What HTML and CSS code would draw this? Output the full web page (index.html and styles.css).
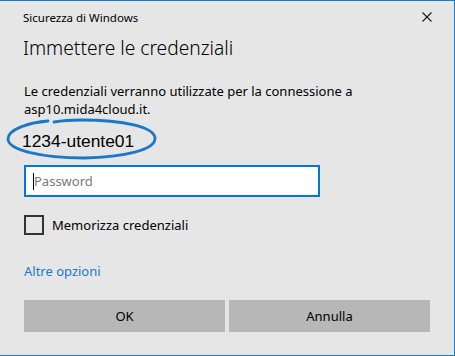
FILE: index.html
```html
<!DOCTYPE html>
<html lang="it">

<head>
  <meta charset="UTF-8" />
  <title>Sicurezza di Windows</title>
  <link rel="stylesheet" href="styles.css">
</head>

<body>

  <div class="dialog">

    <div class="title-bar">
      <span class="title">Sicurezza di Windows</span>
      <svg class="close" width="10" height="10" viewBox="0 0 10 10">
        <path d="M0.5 0.5 L9.5 9.5 M9.5 0.5 L0.5 9.5" stroke="#1a1a1a" stroke-width="1.1" fill="none" />
      </svg>
    </div>

    <h1>Immettere le credenziali</h1>

    <p class="message">Le credenziali verranno utilizzate per la connessione a asp10.mida4cloud.it.</p>

    <div class="user">
      <span class="user-name">1234-utente01</span>
      <!-- mano libera: cerchio blu attorno al nome utente -->
      <svg class="mark" width="152" height="44" viewBox="0 0 152 44">
        <path d="M42 4 C20 6 2 13 2 22 C2 33 36 41 78 41 C118 40 150 33 149 21 C148 10 118 3 75 3 C62 3 54 4 48 5"
          stroke="#1a78c6" stroke-width="2.8" fill="none" stroke-linecap="round" />
      </svg>
    </div>

    <div class="password-box">
      <span class="caret"></span>
      <input type="password" placeholder="Password" />
    </div>

    <label class="remember">
      <span class="check"></span>
      Memorizza credenziali
    </label>

    <a class="more" href="#">Altre opzioni</a>

    <div class="buttons">
      <button>OK</button>
      <button>Annulla</button>
    </div>

  </div>

</body>

</html>
```

FILE: styles.css
```css
body {
  margin: 0;
  font-family: 'Noto Sans', sans-serif;
  color: #000;
}

.dialog {
  width: 455px;
  height: 356px;
  box-sizing: border-box;
  background: #e6e6e6;
  border: 1px solid #1979ca;
  border-left: none;
  padding: 0 24px 0 23px;
}

.title-bar {
  display: flex;
  justify-content: space-between;
  align-items: center;
  height: 32px;
}

.title {
  font-size: 11.5px;
}

.close {
  margin-right: -2px;
}

h1 {
  font-size: 19.2px;
  font-weight: 300;
  margin: 0;
  line-height: 30px;
}

.message {
  font-size: 13px;
  line-height: 18px;
  margin: 19px 0 0 1px;
  width: 340px;
}

.user {
  position: relative;
  height: 40px;
  display: flex;
  align-items: center;
}

.user-name {
  font-family: 'Liberation Sans', sans-serif;
  font-size: 17.4px;
  margin: 6px 0 0 -1px;
}

.mark {
  position: absolute;
  left: -17px;
  top: -1px;
}

.password-box {
  position: relative;
  width: 296px;
  height: 32px;
  box-sizing: border-box;
  border: 2px solid #0078d7;
  background: #fff;
  margin: 7px 0 0 1px;
}

.password-box input {
  width: 100%;
  height: 100%;
  box-sizing: border-box;
  border: none;
  outline: none;
  padding: 0 8px;
  font-family: inherit;
  font-size: 13px;
  background: transparent;
}

.password-box input::placeholder {
  color: #7a7a7a;
}

.caret {
  position: absolute;
  left: 7px;
  top: 6px;
  width: 1px;
  height: 17px;
  background: #000;
}

.remember {
  display: flex;
  align-items: center;
  gap: 8px;
  font-size: 13px;
  margin: 18px 0 0 1px;
}

.check {
  width: 20px;
  height: 20px;
  box-sizing: border-box;
  border: 2px solid #333;
}

.more {
  display: block;
  font-size: 13px;
  color: #1a78d2;
  text-decoration: none;
  margin: 27px 0 0 1px;
}

.buttons {
  display: flex;
  gap: 4px;
  margin: 20px 0 0 1px;
}

.buttons button {
  width: 201px;
  height: 32px;
  border: none;
  background: #b7b7b7;
  font-family: inherit;
  font-size: 13px;
  color: #000;
}
```
